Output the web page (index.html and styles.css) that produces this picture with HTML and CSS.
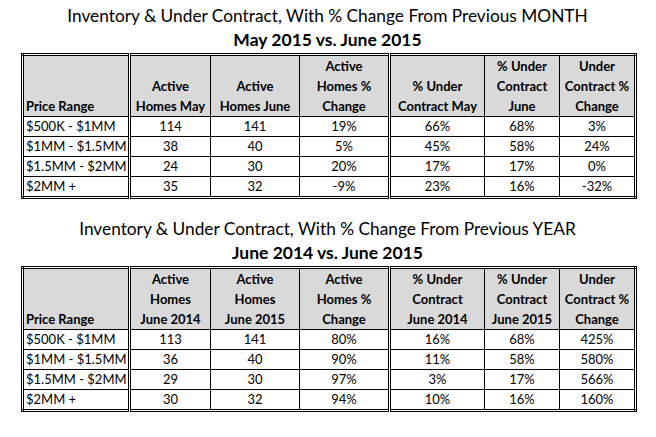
FILE: index.html
```html
<!DOCTYPE html>
<html lang="en">
<head>
<meta charset="utf-8">
<title>Inventory &amp; Under Contract</title>
<link rel="stylesheet" href="styles.css">
</head>
<body>
<main class="page">
  <section class="report">
    <h2 class="title">Inventory &amp; Under Contract, With % Change From Previous MONTH</h2>
    <h3 class="subtitle">May 2015 vs. June 2015</h3>
    <table class="grid">
      <colgroup>
        <col class="c1"><col class="c2"><col class="c3"><col class="c4"><col class="c5"><col class="c6"><col class="c7">
      </colgroup>
      <thead>
        <tr>
          <th class="label group-end">Price Range</th>
          <th>Active<br>Homes May</th>
          <th>Active<br>Homes June</th>
          <th class="group-end">Active<br>Homes %<br>Change</th>
          <th>% Under<br>Contract May</th>
          <th>% Under<br>Contract<br>June</th>
          <th>Under<br>Contract %<br>Change</th>
        </tr>
      </thead>
      <tbody>
        <tr><td class="label group-end">$500K - $1MM</td><td>114</td><td>141</td><td class="group-end">19%</td><td>66%</td><td>68%</td><td>3%</td></tr>
        <tr><td class="label group-end">$1MM - $1.5MM</td><td>38</td><td>40</td><td class="group-end">5%</td><td>45%</td><td>58%</td><td>24%</td></tr>
        <tr><td class="label group-end">$1.5MM - $2MM</td><td>24</td><td>30</td><td class="group-end">20%</td><td>17%</td><td>17%</td><td>0%</td></tr>
        <tr><td class="label group-end">$2MM +</td><td>35</td><td>32</td><td class="group-end">-9%</td><td>23%</td><td>16%</td><td>-32%</td></tr>
      </tbody>
    </table>
  </section>

  <section class="report">
    <h2 class="title">Inventory &amp; Under Contract, With % Change From Previous YEAR</h2>
    <h3 class="subtitle">June 2014 vs. June 2015</h3>
    <table class="grid">
      <colgroup>
        <col class="c1"><col class="c2"><col class="c3"><col class="c4"><col class="c5"><col class="c6"><col class="c7">
      </colgroup>
      <thead>
        <tr>
          <th class="label group-end">Price Range</th>
          <th>Active<br>Homes<br>June 2014</th>
          <th>Active<br>Homes<br>June 2015</th>
          <th class="group-end">Active<br>Homes %<br>Change</th>
          <th>% Under<br>Contract<br>June 2014</th>
          <th>% Under<br>Contract<br>June 2015</th>
          <th>Under<br>Contract %<br>Change</th>
        </tr>
      </thead>
      <tbody>
        <tr><td class="label group-end">$500K - $1MM</td><td>113</td><td>141</td><td class="group-end">80%</td><td>16%</td><td>68%</td><td>425%</td></tr>
        <tr><td class="label group-end">$1MM - $1.5MM</td><td>36</td><td>40</td><td class="group-end">90%</td><td>11%</td><td>58%</td><td>580%</td></tr>
        <tr><td class="label group-end">$1.5MM - $2MM</td><td>29</td><td>30</td><td class="group-end">97%</td><td>3%</td><td>17%</td><td>566%</td></tr>
        <tr><td class="label group-end">$2MM +</td><td>30</td><td>32</td><td class="group-end">94%</td><td>10%</td><td>16%</td><td>160%</td></tr>
      </tbody>
    </table>
  </section>
</main>
</body>
</html>
```

FILE: styles.css
```css
html, body {
  margin: 0;
  padding: 0;
  background: #ffffff;
}

body {
  font-family: Lato, "Liberation Sans", sans-serif;
  color: #000000;
}

.page {
  padding-left: 21px;
  width: 613px;
}

.report {
  padding-top: 4px;
  margin-bottom: 14px;
}

.title {
  margin: 0;
  font-size: 17.3px;
  font-weight: 400;
  line-height: 24px;
  text-align: center;
  white-space: nowrap;
}

.subtitle {
  margin: 0 0 1px 0;
  font-size: 17.5px;
  font-weight: 700;
  line-height: 24px;
  text-align: center;
}

.grid {
  border-collapse: collapse;
  table-layout: fixed;
  width: 613px;
  border: 3px double #000000;
  font-size: 13px;
}

.c1 { width: 107px; }
.c2 { width: 81px; }
.c3 { width: 89px; }
.c4 { width: 90px; }
.c5 { width: 95px; }
.c6 { width: 75px; }
.c7 { width: 76px; }

.grid th,
.grid td {
  border: 1px solid #000000;
  padding: 0 2px;
  text-align: center;
  white-space: nowrap;
  overflow: hidden;
}

.grid th {
  background: #d9d9d9;
  font-weight: 700;
  vertical-align: bottom;
  line-height: 20px;
  height: 60px;
}

.grid td {
  line-height: 19px;
  height: 19px;
}

.grid .label {
  text-align: left;
}

.grid .group-end {
  border-right: 3px double #000000;
}
```
